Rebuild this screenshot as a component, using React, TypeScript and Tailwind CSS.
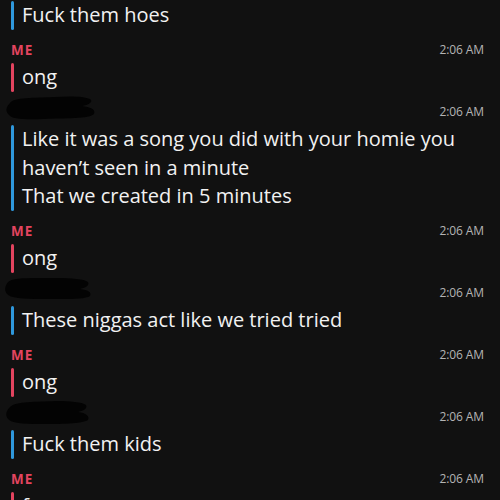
import React from "react";

type Msg = { me: boolean; time: string; lines: string[]; blob?: number; hideHeader?: boolean };

const blobs = [
  "M6 8 C10 2 30 3 50 2 C65 1 80 1 86 4 C90 7 84 10 78 11 C86 12 92 14 90 19 C86 24 60 23 40 24 C20 25 8 24 5 20 C1 16 2 12 6 8 Z",
  "M4 6 C8 1 30 2 52 2 C68 2 80 3 84 6 C86 10 80 12 76 13 C84 14 88 16 86 20 C80 24 58 23 38 23 C18 23 6 22 3 18 C0 14 1 10 4 6 Z",
  "M6 7 C12 1 32 2 52 1 C66 1 78 2 82 5 C84 9 78 11 74 12 C82 13 86 16 84 20 C78 24 56 24 36 24 C18 24 7 23 4 19 C1 15 2 11 6 7 Z",
];

const msgs: Msg[] = [
  { me: false, time: "", lines: ["Fuck them hoes"], hideHeader: true },
  { me: true, time: "2:06 AM", lines: ["ong"] },
  { me: false, time: "2:06 AM", lines: ["Like it was a song you did with your homie you", "haven\u2019t seen in a minute", "That we created in 5 minutes"], blob: 0 },
  { me: true, time: "2:06 AM", lines: ["ong"] },
  { me: false, time: "2:06 AM", lines: ["These niggas act like we tried tried"], blob: 1 },
  { me: true, time: "2:06 AM", lines: ["ong"] },
  { me: false, time: "2:06 AM", lines: ["Fuck them kids"], blob: 2 },
  { me: true, time: "2:06 AM", lines: ["f"] },
];

export default function App() {
  return (
    <div
      className="w-[500px] h-[500px] overflow-hidden bg-[#111111] text-[#f2f2f2]"
      style={{ fontFamily: "'Open Sans', Lato, sans-serif" }}
    >
      <div className="flex flex-col pt-[1px]">
        {msgs.map((m, i) => (
          <div key={i} className="flex flex-col pb-[11.5px]">
            {!m.hideHeader && (
              <div className="flex h-[18px] items-center justify-between pl-[11px] pr-[16px] mb-[4px]">
                {m.me ? (
                  <span className="text-[13.5px] font-bold tracking-[1px] text-[#e3445f]">ME</span>
                ) : (
                  <svg width="94" height="28" viewBox="0 0 94 26" className="-ml-[7px] -mt-[8px]">
                    <path d={blobs[m.blob ?? 0]} fill="#030303" />
                  </svg>
                )}
                <span className="text-[12px] tracking-[-0.1px] text-[#b4b4b4]">{m.time}</span>
              </div>
            )}
            <div className="flex pl-[11px]">
              <div className={`w-[3px] rounded-full ${m.me ? "bg-[#e3445f]" : "bg-[#2f98dc]"}`} />
              <div className="pl-[8px] flex flex-col">
                {m.lines.map((l, j) => (
                  <div key={j} className="h-[28.5px] leading-[28.5px] text-[20px] whitespace-nowrap">
                    {l}
                  </div>
                ))}
              </div>
            </div>
          </div>
        ))}
      </div>
    </div>
  );
}
